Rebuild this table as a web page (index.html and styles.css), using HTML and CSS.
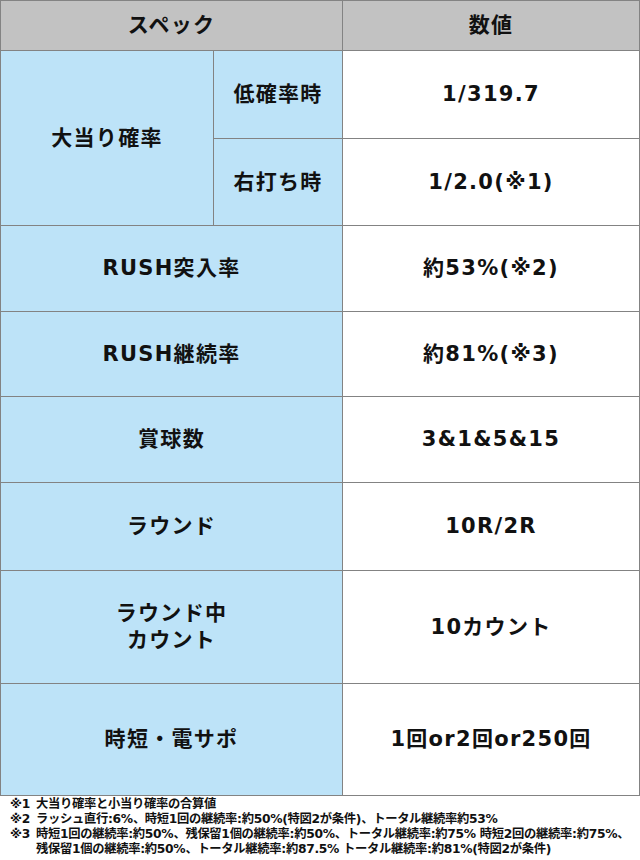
FILE: index.html
```html
<!DOCTYPE html>
<html lang="ja">
<head>
<meta charset="utf-8">
<title>スペック</title>
<link rel="stylesheet" href="styles.css">
</head>
<body>
<div class="spec">
  <div class="cell head span2">スペック</div>
  <div class="cell head">数値</div>

  <div class="cell label rowspan2">大当り確率</div>
  <div class="cell label">低確率時</div>
  <div class="cell value">1/319.7</div>
  <div class="cell label">右打ち時</div>
  <div class="cell value">1/2.0(※1)</div>

  <div class="cell label span2">RUSH突入率</div>
  <div class="cell value">約53%(※2)</div>

  <div class="cell label span2">RUSH継続率</div>
  <div class="cell value">約81%(※3)</div>

  <div class="cell label span2">賞球数</div>
  <div class="cell value">3&amp;1&amp;5&amp;15</div>

  <div class="cell label span2">ラウンド</div>
  <div class="cell value">10R/2R</div>

  <div class="cell label span2">ラウンド中<br>カウント</div>
  <div class="cell value">10カウント</div>

  <div class="cell label span2">時短・電サポ</div>
  <div class="cell value">1回or2回or250回</div>
</div>

<div class="notes">
  <div class="note"><span class="mark">※1</span><span class="text">大当り確率と小当り確率の合算値</span></div>
  <div class="note"><span class="mark">※2</span><span class="text">ラッシュ直行:6%、時短1回の継続率:約50%(特図2が条件)、トータル継続率約53%</span></div>
  <div class="note"><span class="mark">※3</span><span class="text">時短1回の継続率:約50%、残保留1個の継続率:約50%、トータル継続率:約75% 時短2回の継続率:約75%、<br>残保留1個の継続率:約50%、トータル継続率:約87.5% トータル継続率:約81%(特図2が条件)</span></div>
</div>
</body>
</html>
```

FILE: styles.css
```css
html, body {
  margin: 0;
  padding: 0;
  background: #ffffff;
}

body {
  width: 640px;
  font-family: "DejaVu Sans", "Noto Sans CJK JP", sans-serif;
  font-weight: 700;
  color: #111111;
}

.spec {
  display: grid;
  grid-template-columns: 212px 128px 296px;
  grid-template-rows: 49px 87px 86px 85px 84px 85px 87px 112px 111px;
  gap: 1px;
  padding: 1px;
  background: #838383;
  width: 640px;
  box-sizing: border-box;
}

.cell {
  display: flex;
  align-items: center;
  justify-content: center;
  text-align: center;
  font-size: 21px;
  line-height: 27px;
  letter-spacing: 1.3px;
}

.head {
  background: #c2c2c2;
}

.label {
  background: #bde3f8;
}

.value {
  background: #ffffff;
}

.span2 {
  grid-column: span 2;
}

.rowspan2 {
  grid-row: span 2;
}

.notes {
  padding: 1px 0 0 10px;
  font-size: 12.3px;
  line-height: 15px;
  letter-spacing: -0.3px;
}

.note {
  display: flex;
  white-space: nowrap;
}

.mark {
  flex: none;
  width: 26px;
}
```
